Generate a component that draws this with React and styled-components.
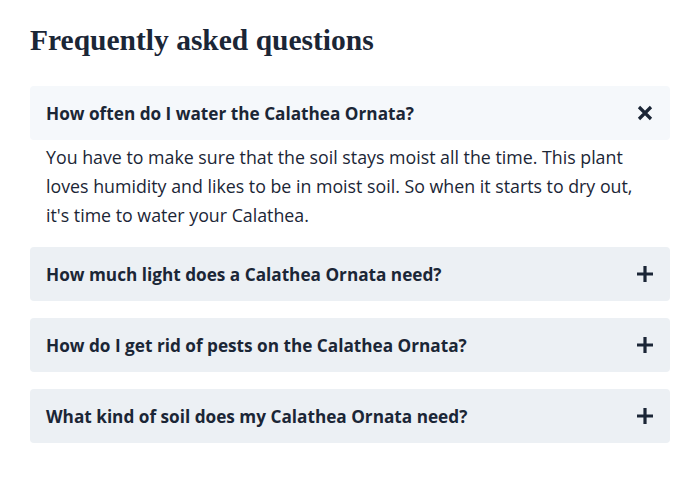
import React, {useState} from 'react';
import styled, {createGlobalStyle} from "styled-components";

const faqs = [
    {
        q: 'How often do I water the Calathea Ornata?',
        a: "You have to make sure that the soil stays moist all the time. This plant loves humidity and likes to be in moist soil. So when it starts to dry out, it's time to water your Calathea."
    },
    {q: 'How much light does a Calathea Ornata need?', a: ''},
    {q: 'How do I get rid of pests on the Calathea Ornata?', a: ''},
    {q: 'What kind of soil does my Calathea Ornata need?', a: ''},
]

function PlusIcon() {
    return (
        <svg width="18" height="18" viewBox="0 0 18 18">
            <path d="M9 1v16M1 9h16" stroke="currentColor" strokeWidth="3.2"/>
        </svg>
    )
}

function CloseIcon() {
    return (
        <svg width="16" height="16" viewBox="0 0 16 16">
            <path d="M2 2l12 12M14 2L2 14" stroke="currentColor" strokeWidth="3.2"/>
        </svg>
    )
}

function App() {
    const [open, setOpen] = useState(0)

    return (
        <Page>
            <GlobalStyle/>
            <Heading>Frequently asked questions</Heading>
            <List>
                {faqs.map((item, i) => (
                    <Item key={item.q}>
                        <Question open={open === i} onClick={() => setOpen(open === i ? -1 : i)}>
                            <span>{item.q}</span>
                            <IconBox>{open === i ? <CloseIcon/> : <PlusIcon/>}</IconBox>
                        </Question>
                        {open === i && <Answer>{item.a}</Answer>}
                    </Item>
                ))}
            </List>
        </Page>
    );
}

const GlobalStyle = createGlobalStyle`
body {
  margin: 0;
  background: #ffffff;
  color: #1b2636;
  font-family: "Open Sans", "Noto Sans", sans-serif;
}
`;
const Page = styled.div`
padding: 23px 30px;
`;
const Heading = styled.h2`
margin: 0 0 29px;
font-family: "Liberation Serif", serif;
font-size: 29.5px;
font-weight: bold;
line-height: 34px;
color: #1b2636;
`;
const List = styled.div`
display: flex;
flex-direction: column;
gap: 17px;
`;
const Item = styled.div`
display: flex;
flex-direction: column;
`;
const Question = styled.button`
display: flex;
align-items: center;
justify-content: space-between;
height: 54px;
padding: 0 16px;
border: none;
border-radius: 4px;
background-color: ${props => props.open ? '#f5f8fb' : '#ecf0f4'};
color: #1b2636;
font-family: "Open Sans", "Noto Sans", sans-serif;
font-size: 17.2px;
font-weight: bold;
text-align: left;
cursor: pointer;
`;
const IconBox = styled.span`
display: flex;
align-items: center;
justify-content: center;
width: 18px;
height: 18px;
color: #1b2636;
`;
const Answer = styled.p`
margin: 0;
padding: 3px 16px 0;
font-size: 17.8px;
line-height: 29px;
color: #1b2636;
`;

export default App;
